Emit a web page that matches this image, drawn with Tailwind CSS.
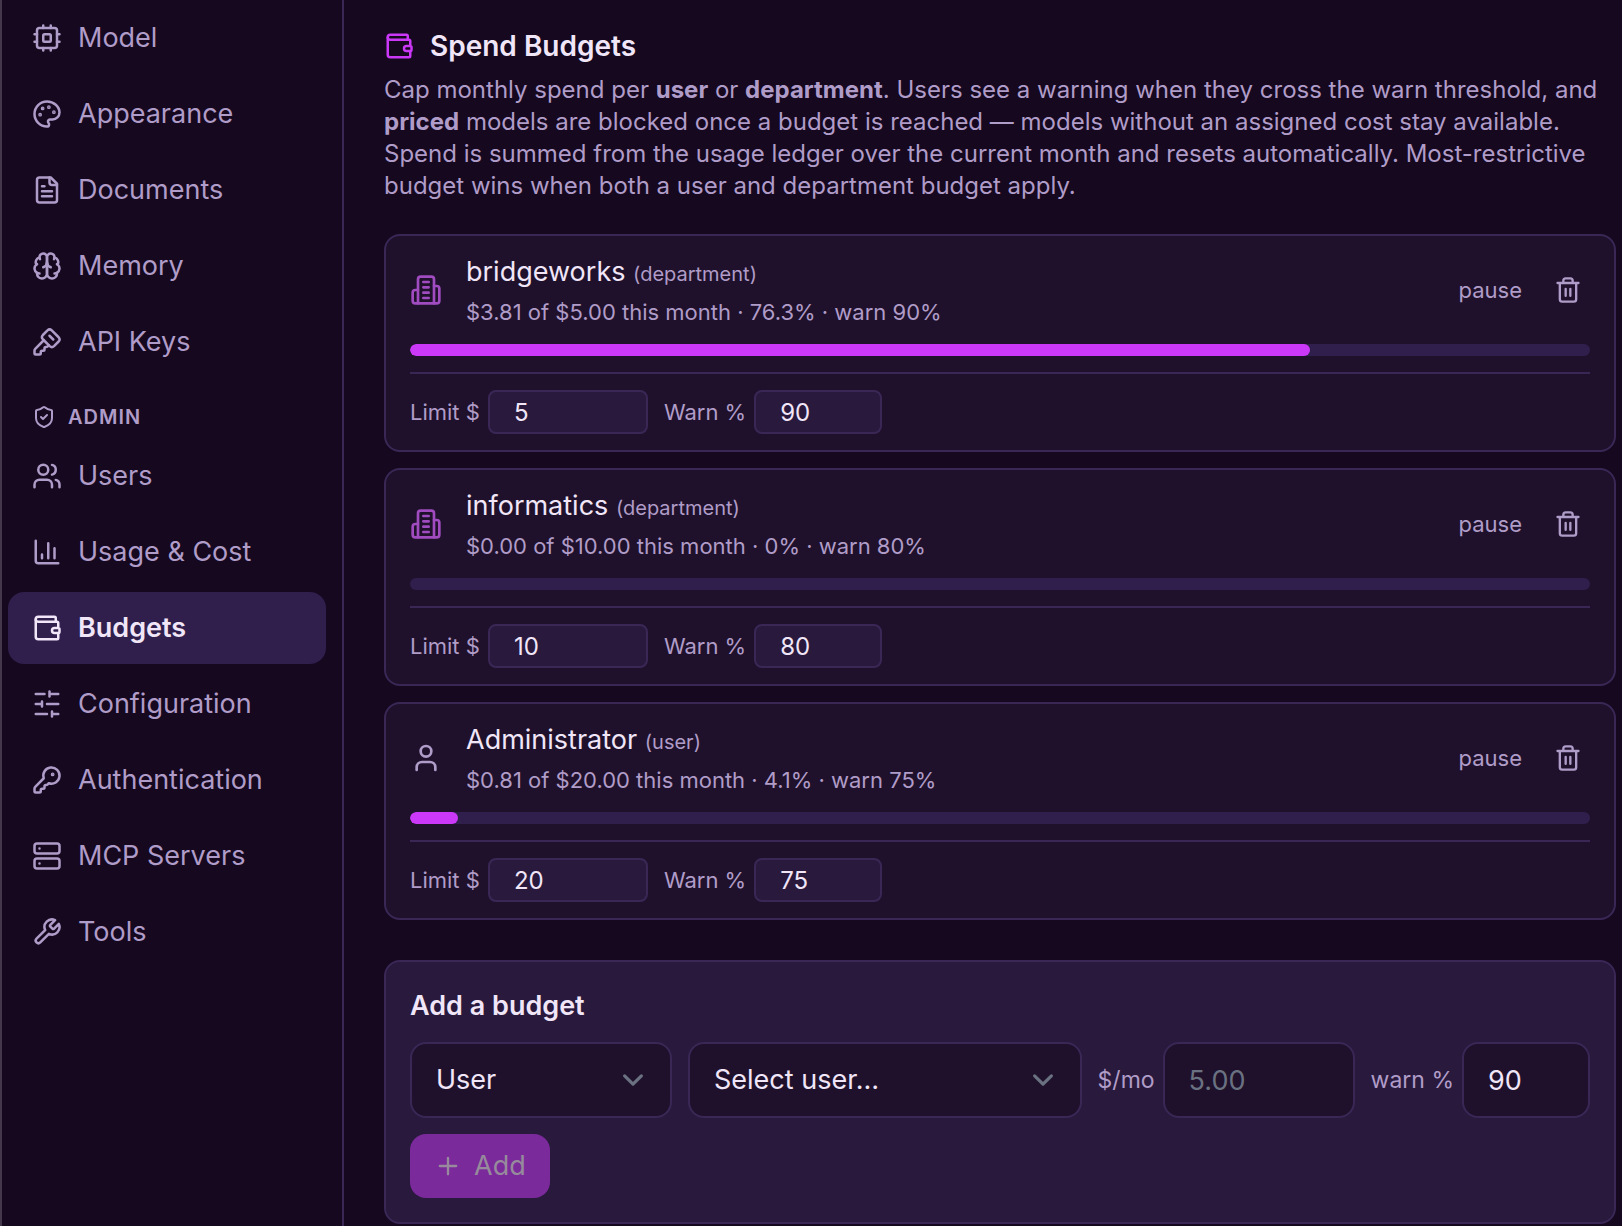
<!DOCTYPE html>
<html lang="en">
  <head>
    <meta charset="UTF-8" />
    <meta name="viewport" content="width=device-width, initial-scale=1.0" />
    <title>Spend Budgets</title>
    <script src="https://cdn.jsdelivr.net/npm/@tailwindcss/browser@4"></script>
  </head>
  <body class="bg-[#15081f] text-[#f0e6f8] font-['Inter','Liberation_Sans',sans-serif]">

    <!-- icon sprite -->
    <svg class="hidden" xmlns="http://www.w3.org/2000/svg">
      <symbol id="i-cpu" viewBox="0 0 24 24"><rect width="16" height="16" x="4" y="4" rx="2" /><rect width="6" height="6" x="9" y="9" rx="1" /><path d="M15 2v2M15 20v2M2 15h2M2 9h2M20 15h2M20 9h2M9 2v2M9 20v2" /></symbol>
      <symbol id="i-palette" viewBox="0 0 24 24"><circle cx="13.5" cy="6.5" r=".5" fill="currentColor" /><circle cx="17.5" cy="10.5" r=".5" fill="currentColor" /><circle cx="8.5" cy="7.5" r=".5" fill="currentColor" /><circle cx="6.5" cy="12.5" r=".5" fill="currentColor" /><path d="M12 2C6.5 2 2 6.5 2 12s4.500 10 10 10c.926 0 1.648-.746 1.648-1.688 0-.437-.18-.835-.437-1.125-.29-.289-.438-.652-.438-1.125a1.640 1.640 0 0 1 1.668-1.668h1.996c3.051 0 5.555-2.503 5.555-5.554C21.965 6.012 17.461 2 12 2z" /></symbol>
      <symbol id="i-file" viewBox="0 0 24 24"><path d="M15 2H6a2 2 0 0 0-2 2v16a2 2 0 0 0 2 2h12a2 2 0 0 0 2-2V7Z" /><path d="M14 2v4a2 2 0 0 0 2 2h4M10 9H8M16 13H8M16 17H8" /></symbol>
      <symbol id="i-brain" viewBox="0 0 24 24"><path d="M12 5a3 3 0 1 0-5.997.125 4 4 0 0 0-2.526 5.770 4 4 0 0 0 .556 6.588A4 4 0 1 0 12 18Z" /><path d="M12 5a3 3 0 1 1 5.997.125 4 4 0 0 1 2.526 5.770 4 4 0 0 1-.556 6.588A4 4 0 1 1 12 18Z" /><path d="M15 13a4.500 4.500 0 0 1-3-4 4.500 4.500 0 0 1-3 4M17.599 6.500a3 3 0 0 0 .399-1.375M6.003 5.125A3 3 0 0 0 6.401 6.500M3.477 10.896a4 4 0 0 1 .585-.396M19.938 10.500a4 4 0 0 1 .585.396M6 18a4 4 0 0 1-1.967-.516M19.967 17.484A4 4 0 0 1 18 18" /></symbol>
      <symbol id="i-key-square" viewBox="0 0 24 24"><path d="M12.400 2.700a2.500 2.500 0 0 1 3.400 0l5.500 5.500a2.500 2.500 0 0 1 0 3.400l-3.700 3.700a2.500 2.500 0 0 1-3.400 0L8.700 9.800a2.500 2.500 0 0 1 0-3.400z" /><path d="m14 7 3 3" /><path d="m9.400 10.600-6.814 6.814A2 2 0 0 0 2 18.828V21a1 1 0 0 0 1 1h3a1 1 0 0 0 1-1v-1a1 1 0 0 1 1-1h1a1 1 0 0 0 1-1v-1a1 1 0 0 1 1-1h.172a2 2 0 0 0 1.414-.586l.814-.814" /></symbol>
      <symbol id="i-shield" viewBox="0 0 24 24"><path d="M20 13c0 5-3.500 7.500-7.660 8.950a1 1 0 0 1-.67-.01C7.500 20.500 4 18 4 13V6a1 1 0 0 1 1-1c2 0 4.500-1.200 6.240-2.720a1.170 1.170 0 0 1 1.520 0C14.510 3.810 17 5 19 5a1 1 0 0 1 1 1z" /><path d="m9 12 2 2 4-4" /></symbol>
      <symbol id="i-users" viewBox="0 0 24 24"><path d="M16 21v-2a4 4 0 0 0-4-4H6a4 4 0 0 0-4 4v2" /><circle cx="9" cy="7" r="4" /><path d="M22 21v-2a4 4 0 0 0-3-3.870M16 3.130a4 4 0 0 1 0 7.750" /></symbol>
      <symbol id="i-chart" viewBox="0 0 24 24"><path d="M3 3v16a2 2 0 0 0 2 2h16M18 17V9M13 17V5M8 17v-3" /></symbol>
      <symbol id="i-wallet" viewBox="0 0 24 24"><path d="M19 7V4a1 1 0 0 0-1-1H5a2 2 0 0 0 0 4h15a1 1 0 0 1 1 1v4h-3a2 2 0 0 0 0 4h3a1 1 0 0 0 1-1v-2a1 1 0 0 0-1-1" /><path d="M3 5v14a2 2 0 0 0 2 2h15a1 1 0 0 0 1-1v-4" /></symbol>
      <symbol id="i-sliders" viewBox="0 0 24 24"><path d="M21 4h-7M10 4H3M21 12h-9M8 12H3M21 20h-5M12 20H3M14 2v4M8 10v4M16 18v4" /></symbol>
      <symbol id="i-key" viewBox="0 0 24 24"><path d="M2.586 17.414A2 2 0 0 0 2 18.828V21a1 1 0 0 0 1 1h3a1 1 0 0 0 1-1v-1a1 1 0 0 1 1-1h1a1 1 0 0 0 1-1v-1a1 1 0 0 1 1-1h.172a2 2 0 0 0 1.414-.586l.814-.814a6.500 6.500 0 1 0-4-4z" /><circle cx="16.500" cy="7.500" r=".5" fill="currentColor" /></symbol>
      <symbol id="i-server" viewBox="0 0 24 24"><rect width="20" height="8" x="2" y="2" rx="2" /><rect width="20" height="8" x="2" y="14" rx="2" /><path d="M6 6h.01M6 18h.01" /></symbol>
      <symbol id="i-wrench" viewBox="0 0 24 24"><path d="M14.700 6.300a1 1 0 0 0 0 1.400l1.600 1.600a1 1 0 0 0 1.400 0l3.770-3.770a6 6 0 0 1-7.940 7.940l-6.910 6.910a2.120 2.120 0 0 1-3-3l6.910-6.910a6 6 0 0 1 7.940-7.940l-3.760 3.760z" /></symbol>
      <symbol id="i-building" viewBox="0 0 24 24"><path d="M6 22V4a2 2 0 0 1 2-2h8a2 2 0 0 1 2 2v18Z" /><path d="M6 12H4a2 2 0 0 0-2 2v6a2 2 0 0 0 2 2h2M18 9h2a2 2 0 0 1 2 2v9a2 2 0 0 1-2 2h-2M10 6h4M10 10h4M10 14h4M10 18h4" /></symbol>
      <symbol id="i-user" viewBox="0 0 24 24"><path d="M19 21v-2a4 4 0 0 0-4-4H9a4 4 0 0 0-4 4v2" /><circle cx="12" cy="7" r="4" /></symbol>
      <symbol id="i-trash" viewBox="0 0 24 24"><path d="M3 6h18M19 6v14a2 2 0 0 1-2 2H7a2 2 0 0 1-2-2V6M8 6V4a2 2 0 0 1 2-2h4a2 2 0 0 1 2 2v2M10 11v6M14 11v6" /></symbol>
      <symbol id="i-plus" viewBox="0 0 24 24"><path d="M5 12h14M12 5v14" /></symbol>
      <symbol id="i-chevron" viewBox="0 0 20 20"><path d="m6 8 4 4 4-4" /></symbol>
    </svg>

    <div class="flex min-h-screen">

      <!-- sidebar -->
      <nav class="flex w-[344px] shrink-0 flex-col gap-1 border-x-2 border-l-[#44374c] border-r-[#3a2756] pl-1.5 pr-4 pt-0.5 text-[27px]/[40px] text-[#b09cc8]">
        <a href="#" class="flex items-center gap-4 rounded-2xl px-6 py-4">
          <svg class="size-[30px] shrink-0 fill-none stroke-current stroke-2" stroke-linecap="round" stroke-linejoin="round"><use href="#i-cpu" /></svg>
          Model
        </a>
        <a href="#" class="flex items-center gap-4 rounded-2xl px-6 py-4">
          <svg class="size-[30px] shrink-0 fill-none stroke-current stroke-2" stroke-linecap="round" stroke-linejoin="round"><use href="#i-palette" /></svg>
          Appearance
        </a>
        <a href="#" class="flex items-center gap-4 rounded-2xl px-6 py-4">
          <svg class="size-[30px] shrink-0 fill-none stroke-current stroke-2" stroke-linecap="round" stroke-linejoin="round"><use href="#i-file" /></svg>
          Documents
        </a>
        <a href="#" class="flex items-center gap-4 rounded-2xl px-6 py-4">
          <svg class="size-[30px] shrink-0 fill-none stroke-current stroke-2" stroke-linecap="round" stroke-linejoin="round"><use href="#i-brain" /></svg>
          Memory
        </a>
        <a href="#" class="flex items-center gap-4 rounded-2xl px-6 py-4">
          <svg class="size-[30px] shrink-0 fill-none stroke-current stroke-2" stroke-linecap="round" stroke-linejoin="round"><use href="#i-key-square" /></svg>
          API Keys
        </a>

        <h2 class="flex items-center gap-3 px-6 pb-1 pt-5 text-xl/[30px] font-semibold uppercase tracking-wider">
          <svg class="size-6 shrink-0 fill-none stroke-current stroke-2" stroke-linecap="round" stroke-linejoin="round"><use href="#i-shield" /></svg>
          Admin
        </h2>

        <a href="#" class="flex items-center gap-4 rounded-2xl px-6 py-4">
          <svg class="size-[30px] shrink-0 fill-none stroke-current stroke-2" stroke-linecap="round" stroke-linejoin="round"><use href="#i-users" /></svg>
          Users
        </a>
        <a href="#" class="flex items-center gap-4 rounded-2xl px-6 py-4">
          <svg class="size-[30px] shrink-0 fill-none stroke-current stroke-2" stroke-linecap="round" stroke-linejoin="round"><use href="#i-chart" /></svg>
          Usage &amp; Cost
        </a>
        <a href="#" aria-current="page" class="flex items-center gap-4 rounded-2xl bg-[#301f4c] px-6 py-4 font-semibold text-[#f0e6f8]">
          <svg class="size-[30px] shrink-0 fill-none stroke-current stroke-2" stroke-linecap="round" stroke-linejoin="round"><use href="#i-wallet" /></svg>
          Budgets
        </a>
        <a href="#" class="flex items-center gap-4 rounded-2xl px-6 py-4">
          <svg class="size-[30px] shrink-0 fill-none stroke-current stroke-2" stroke-linecap="round" stroke-linejoin="round"><use href="#i-sliders" /></svg>
          Configuration
        </a>
        <a href="#" class="flex items-center gap-4 rounded-2xl px-6 py-4">
          <svg class="size-[30px] shrink-0 fill-none stroke-current stroke-2" stroke-linecap="round" stroke-linejoin="round"><use href="#i-key" /></svg>
          Authentication
        </a>
        <a href="#" class="flex items-center gap-4 rounded-2xl px-6 py-4">
          <svg class="size-[30px] shrink-0 fill-none stroke-current stroke-2" stroke-linecap="round" stroke-linejoin="round"><use href="#i-server" /></svg>
          MCP Servers
        </a>
        <a href="#" class="flex items-center gap-4 rounded-2xl px-6 py-4">
          <svg class="size-[30px] shrink-0 fill-none stroke-current stroke-2" stroke-linecap="round" stroke-linejoin="round"><use href="#i-wrench" /></svg>
          Tools
        </a>
      </nav>

      <!-- main -->
      <main class="min-w-0 flex-1 pl-10 pr-1.5 pt-[26px]">
        <h1 class="mb-2 flex items-center gap-4 text-[28px]/[40px] font-semibold">
          <svg class="size-[30px] shrink-0 fill-none stroke-[#cc38f8] stroke-2" stroke-linecap="round" stroke-linejoin="round"><use href="#i-wallet" /></svg>
          Spend Budgets
        </h1>
        <p class="mb-8 text-2xl/[32px] text-[#b09cc8]">
          Cap monthly spend per <strong>user</strong> or <strong>department</strong>. Users see a warning when they cross the warn threshold, and <strong>priced</strong> models are blocked once a budget is reached — models without an assigned cost stay available. Spend is summed from the usage ledger over the current month and resets automatically. Most-restrictive budget wins when both a user and department budget apply.
        </p>

        <!-- budget list -->
        <div class="mb-10 flex flex-col gap-4">
          <section class="rounded-2xl border-2 border-[#3a2756] bg-[#1f112b] px-6 py-4 text-[22px]/[32px] text-[#b09cc8]">
            <div class="flex items-center gap-6">
              <svg class="size-8 shrink-0 fill-none stroke-[#a04cc0] stroke-2" stroke-linecap="round" stroke-linejoin="round"><use href="#i-building" /></svg>
              <div class="flex-1">
                <h3 class="text-[27px]/[40px] text-[#f0e6f8]">bridgeworks <span class="text-xl text-[#b09cc8]">(department)</span></h3>
                <p class="mt-1">$3.81 of $5.00 this month · 76.3% · warn 90%</p>
              </div>
              <div class="flex items-center gap-4">
                <button type="button" class="px-2">pause</button>
                <button type="button" aria-label="Delete bridgeworks budget" class="p-2">
                  <svg class="size-7 fill-none stroke-current stroke-2" stroke-linecap="round" stroke-linejoin="round"><use href="#i-trash" /></svg>
                </button>
              </div>
            </div>
            <div class="mt-4 h-3 overflow-hidden rounded-full bg-[#301f4c]">
              <div class="h-full rounded-full bg-[#cc38f8]" style="width: 76.3%"></div>
            </div>
            <div class="mt-4 flex items-center gap-4 border-t-2 border-[#3a2756] pt-4">
              <label class="flex items-center gap-2">Limit $
                <input type="text" inputmode="decimal" value="5" class="h-11 w-40 rounded-lg border-2 border-[#3a2756] bg-[#29193d] px-6 text-2xl text-[#f0e6f8]" />
              </label>
              <label class="flex items-center gap-2">Warn %
                <input type="text" inputmode="numeric" value="90" class="h-11 w-32 rounded-lg border-2 border-[#3a2756] bg-[#29193d] px-6 text-2xl text-[#f0e6f8]" />
              </label>
            </div>
          </section>

          <section class="rounded-2xl border-2 border-[#3a2756] bg-[#1f112b] px-6 py-4 text-[22px]/[32px] text-[#b09cc8]">
            <div class="flex items-center gap-6">
              <svg class="size-8 shrink-0 fill-none stroke-[#a04cc0] stroke-2" stroke-linecap="round" stroke-linejoin="round"><use href="#i-building" /></svg>
              <div class="flex-1">
                <h3 class="text-[27px]/[40px] text-[#f0e6f8]">informatics <span class="text-xl text-[#b09cc8]">(department)</span></h3>
                <p class="mt-1">$0.00 of $10.00 this month · 0% · warn 80%</p>
              </div>
              <div class="flex items-center gap-4">
                <button type="button" class="px-2">pause</button>
                <button type="button" aria-label="Delete informatics budget" class="p-2">
                  <svg class="size-7 fill-none stroke-current stroke-2" stroke-linecap="round" stroke-linejoin="round"><use href="#i-trash" /></svg>
                </button>
              </div>
            </div>
            <div class="mt-4 h-3 overflow-hidden rounded-full bg-[#301f4c]">
              <div class="h-full rounded-full bg-[#cc38f8]" style="width: 0%"></div>
            </div>
            <div class="mt-4 flex items-center gap-4 border-t-2 border-[#3a2756] pt-4">
              <label class="flex items-center gap-2">Limit $
                <input type="text" inputmode="decimal" value="10" class="h-11 w-40 rounded-lg border-2 border-[#3a2756] bg-[#29193d] px-6 text-2xl text-[#f0e6f8]" />
              </label>
              <label class="flex items-center gap-2">Warn %
                <input type="text" inputmode="numeric" value="80" class="h-11 w-32 rounded-lg border-2 border-[#3a2756] bg-[#29193d] px-6 text-2xl text-[#f0e6f8]" />
              </label>
            </div>
          </section>

          <section class="rounded-2xl border-2 border-[#3a2756] bg-[#1f112b] px-6 py-4 text-[22px]/[32px] text-[#b09cc8]">
            <div class="flex items-center gap-6">
              <svg class="size-8 shrink-0 fill-none stroke-current stroke-2" stroke-linecap="round" stroke-linejoin="round"><use href="#i-user" /></svg>
              <div class="flex-1">
                <h3 class="text-[27px]/[40px] text-[#f0e6f8]">Administrator <span class="text-xl text-[#b09cc8]">(user)</span></h3>
                <p class="mt-1">$0.81 of $20.00 this month · 4.1% · warn 75%</p>
              </div>
              <div class="flex items-center gap-4">
                <button type="button" class="px-2">pause</button>
                <button type="button" aria-label="Delete Administrator budget" class="p-2">
                  <svg class="size-7 fill-none stroke-current stroke-2" stroke-linecap="round" stroke-linejoin="round"><use href="#i-trash" /></svg>
                </button>
              </div>
            </div>
            <div class="mt-4 h-3 overflow-hidden rounded-full bg-[#301f4c]">
              <div class="h-full rounded-full bg-[#cc38f8]" style="width: 4.1%"></div>
            </div>
            <div class="mt-4 flex items-center gap-4 border-t-2 border-[#3a2756] pt-4">
              <label class="flex items-center gap-2">Limit $
                <input type="text" inputmode="decimal" value="20" class="h-11 w-40 rounded-lg border-2 border-[#3a2756] bg-[#29193d] px-6 text-2xl text-[#f0e6f8]" />
              </label>
              <label class="flex items-center gap-2">Warn %
                <input type="text" inputmode="numeric" value="75" class="h-11 w-32 rounded-lg border-2 border-[#3a2756] bg-[#29193d] px-6 text-2xl text-[#f0e6f8]" />
              </label>
            </div>
          </section>
        </div>

        <!-- add form -->
        <form class="rounded-2xl border-2 border-[#3a2756] bg-[#29193d] p-6">
          <h2 class="mb-4 text-[27px]/[40px] font-semibold">Add a budget</h2>
          <div class="flex flex-wrap items-center gap-4 text-[23px]/[32px] text-[#b09cc8]">
            <div class="relative w-[262px]">
              <select aria-label="Budget type" class="h-[76px] w-full appearance-none rounded-2xl border-2 border-[#3a2756] bg-[#1f112b] pl-6 pr-16 text-[27px] text-[#f0e6f8]">
                <option>User</option>
                <option>Department</option>
              </select>
              <svg class="pointer-events-none absolute right-[18px] top-[17px] size-[42px] fill-none stroke-gray-500 stroke-[1.5]" stroke-linecap="round" stroke-linejoin="round"><use href="#i-chevron" /></svg>
            </div>
            <div class="relative min-w-[360px] flex-1">
              <select aria-label="User" class="h-[76px] w-full appearance-none rounded-2xl border-2 border-[#3a2756] bg-[#1f112b] pl-6 pr-16 text-[27px] text-[#f0e6f8]">
                <option>Select user…</option>
              </select>
              <svg class="pointer-events-none absolute right-[18px] top-[17px] size-[42px] fill-none stroke-gray-500 stroke-[1.5]" stroke-linecap="round" stroke-linejoin="round"><use href="#i-chevron" /></svg>
            </div>
            <label class="flex items-center gap-2">$/mo
              <input type="text" inputmode="decimal" placeholder="5.00" class="h-[76px] w-48 rounded-2xl border-2 border-[#3a2756] bg-[#1f112b] px-6 text-[27px] text-[#f0e6f8] placeholder:text-gray-500" />
            </label>
            <label class="flex items-center gap-2">warn %
              <input type="text" inputmode="numeric" value="90" class="h-[76px] w-32 rounded-2xl border-2 border-[#3a2756] bg-[#1f112b] px-6 text-[27px] text-[#f0e6f8]" />
            </label>
            <button type="submit" disabled class="flex h-16 items-center gap-3 rounded-2xl bg-[#7b2a9b] px-6 text-[27px] text-[#968a9c]">
              <svg class="size-7 fill-none stroke-current stroke-2" stroke-linecap="round" stroke-linejoin="round"><use href="#i-plus" /></svg>
              Add
            </button>
          </div>
        </form>
      </main>
    </div>
  </body>
</html>
